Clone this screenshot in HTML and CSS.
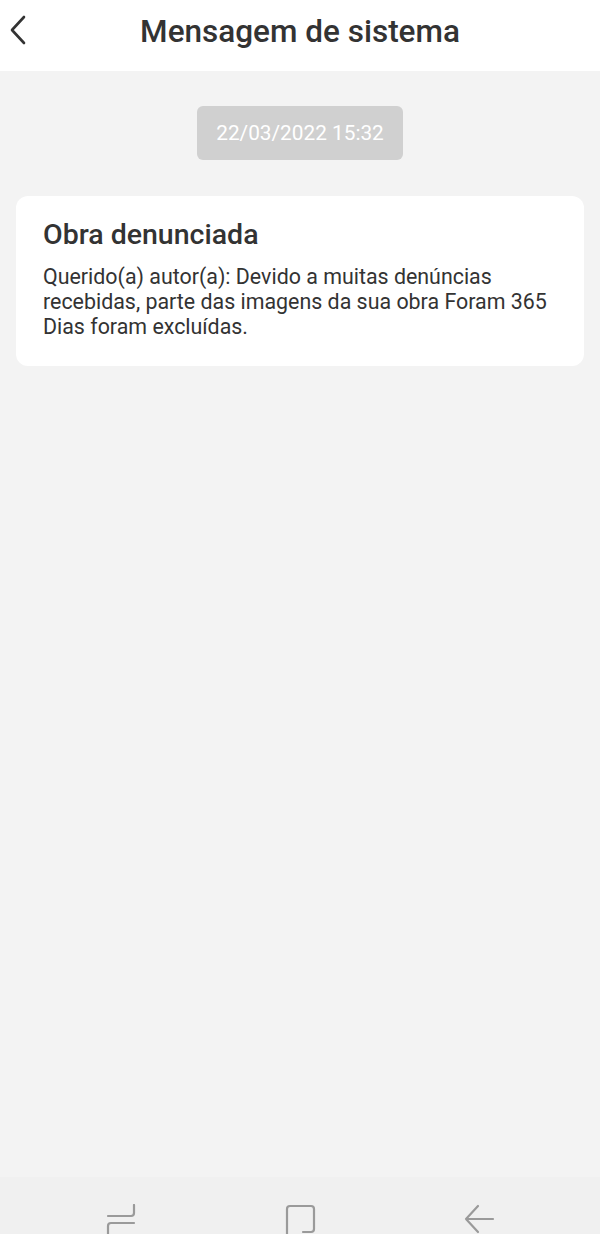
FILE: index.html
```html
<!DOCTYPE html>
<html lang="pt">
<head>
    <meta charset="UTF-8">
    <meta name="viewport" content="width=device-width, initial-scale=1.0">
    <title>Mensagem de sistema</title>
    <link rel="stylesheet" href="styles.css">
</head>
<body>
    <div class="screen">
        <div class="topbar">
            <svg class="back" width="20" height="30" viewBox="0 0 20 30">
                <path d="M16 2 L4 15 L16 28" fill="none" stroke="#333" stroke-width="2.6" stroke-linecap="round" stroke-linejoin="round"/>
            </svg>
            <h1>Mensagem de sistema</h1>
        </div>
        <div class="content">
            <div class="date">22/03/2022 15:32</div>
            <div class="card">
                <h2>Obra denunciada</h2>
                <p>Querido(a) autor(a): Devido a muitas denúncias recebidas, parte das imagens da sua obra Foram 365 Dias foram excluídas.</p>
            </div>
        </div>
        <div class="navbar">
            <!-- recents -->
            <svg width="32" height="30" viewBox="0 0 32 30">
                <path d="M3 12 H26 Q29 12 29 9 V1 M29 19 H6 Q3 19 3 22 V31" fill="none" stroke="#9a9a9a" stroke-width="2.2" stroke-linecap="round"/>
            </svg>
            <!-- home -->
            <svg width="32" height="30" viewBox="0 0 32 30">
                <path d="M3 31 V5 Q3 2 6 2 H27 Q30 2 30 5 V25 Q30 28 27 28 H19" fill="none" stroke="#9a9a9a" stroke-width="2.2" stroke-linecap="round"/>
            </svg>
            <!-- back -->
            <svg width="32" height="30" viewBox="0 0 32 30">
                <path d="M15 2 L3 15 L15 28 M3 15 H30" fill="none" stroke="#9a9a9a" stroke-width="2.2" stroke-linecap="round" stroke-linejoin="round"/>
            </svg>
        </div>
    </div>
</body>
</html>
```

FILE: styles.css
```css
*{
   margin: 0;
   padding: 0;
   box-sizing: border-box;
}
body{
   font-family: Roboto, "Liberation Sans", sans-serif;
   background-color: #f3f3f3;
}
.screen{
   height: 1234px;
   display: flex;
   flex-direction: column;
   overflow: hidden;
}
.topbar{
   height: 71px;
   background-color: #fff;
   display: flex;
   align-items: center;
   justify-content: center;
   position: relative;
}
.topbar .back{
   position: absolute;
   left: 8px;
   top: 15px;
}
.topbar h1{
   font-size: 31.5px;
   font-weight: 500;
   color: #333;
   margin-top: -8px;
}
.content{
   flex: 1;
   display: flex;
   flex-direction: column;
   align-items: center;
   padding: 35px 16px 0;
}
.date{
   width: 206px;
   height: 54px;
   background-color: #d0d0d0;
   color: #fff;
   font-size: 20.8px;
   border-radius: 6px;
   display: flex;
   align-items: center;
   justify-content: center;
}
.card{
   align-self: stretch;
   margin-top: 36px;
   background-color: #fff;
   border-radius: 12px;
   padding: 22px 27px 27px;
   color: #333;
}
.card h2{
   font-size: 28.5px;
   font-weight: 500;
   line-height: 34px;
}
.card p{
   margin-top: 12px;
   font-size: 21.4px;
   line-height: 25px;
}
.navbar{
   height: 57px;
   background-color: #f0f0f0;
   display: flex;
   justify-content: center;
   align-items: flex-start;
   gap: 147px;
   padding-top: 27px;
}
```
